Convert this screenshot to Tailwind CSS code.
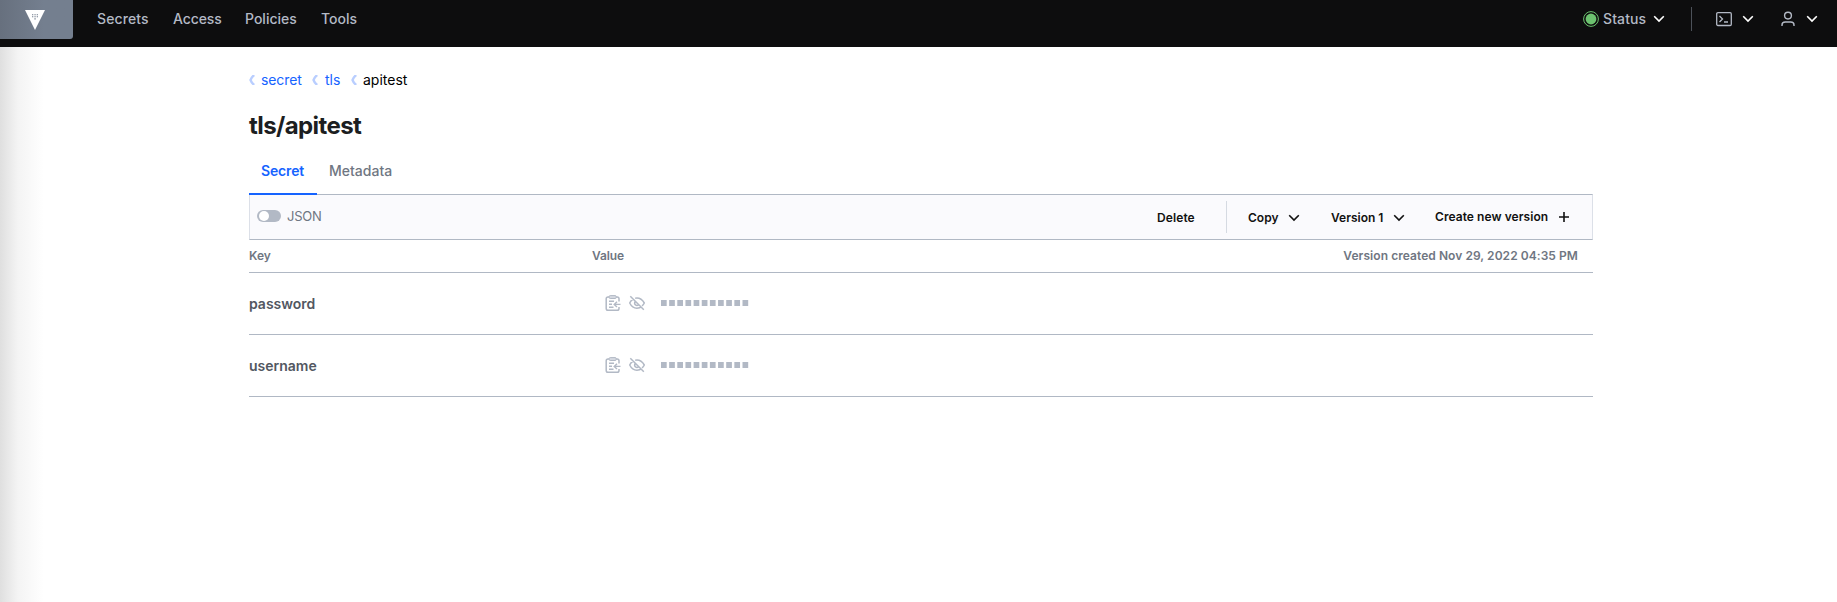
<!DOCTYPE html>
<html lang="en">
<head>
<meta charset="utf-8">
<title>tls/apitest</title>
<script src="https://cdn.jsdelivr.net/npm/@tailwindcss/browser@4"></script>
</head>
<body class="h-[602px] overflow-hidden bg-white font-['Inter',sans-serif] text-sm whitespace-nowrap">
<svg class="hidden">
  <symbol id="chev" viewBox="0 0 12 8"><path d="M1.2 1.3 6 6.1l4.8-4.8" fill="none" stroke="currentColor" stroke-width="1.6"/></symbol>
  <symbol id="crumb" viewBox="0 0 6 10"><path d="M5.2 0Q2.6 2 1.5 5q1.1 3 3.7 5" fill="none" stroke="currentColor" stroke-width="2.3"/></symbol>
  <symbol id="clip" viewBox="0 0 16 16"><path d="M4.5 2H3Q1.2 2 1.2 3.8v9.6q0 1.8 1.8 1.8h9.2q1.8 0 1.8-1.8V12M11 2h1.2q1.8 0 1.8 1.8V6.5" fill="none" stroke="currentColor" stroke-width="1.5"/><rect x="4.2" y=".6" width="7" height="2.9" rx="1" fill="#d5d9e1" stroke="currentColor"/><path d="M4 6.2h5M4 9.2h3M4 12.2h4.5M15.5 9.4H9.2M12 6.7 9.2 9.4l2.8 2.7" fill="none" stroke="currentColor" stroke-width="1.4"/></symbol>
  <symbol id="eyeoff" viewBox="0 0 16 16"><path d="M6.2 3.2Q11.8 2 15.3 8 14.5 9.6 13 10.9M3.8 4.3Q1.6 5.7.7 8q3 6 8.6 5.1 1.3-.2 2.5-1M6.4 6.5Q4.8 8.3 6.5 9.9 8 11 9.6 9.8M1.3 1.2l13.5 13.6" fill="none" stroke="currentColor" stroke-width="1.5"/></symbol>
</svg>
<header class="flex h-[47px] bg-[#0d0d0e] font-medium text-[#b3b9c5]">
  <div class="h-[39px] w-[73px] rounded-br-[3px] bg-linear-to-r from-[#67707e] to-[#747f8f] to-60%">
    <svg class="mt-[10px] ml-[25px] h-5 w-5" viewBox="0 0 20 20"><path d="M0 0h20L10 20z" fill="#fff"/><path d="M7 4.7h1.3M9.4 4.7h1.3M11.7 4.7H13M7 6.8h1.3M9.4 6.8h1.3M11.7 6.8H13M9.4 8.9h1.3" stroke="#747f8f" stroke-width="1.1"/></svg>
  </div>
  <nav class="flex h-[38px] items-center pl-6">
    <span class="w-[76px] tracking-[0.1px]">Secrets</span><span class="w-[72px] tracking-[-0.1px]">Access</span><span class="w-[76px]">Policies</span><span>Tools</span>
  </nav>
  <div class="ml-auto flex h-[38px] items-center pr-[19px]">
    <svg class="mr-1 h-4 w-4" viewBox="0 0 16 16"><circle cx="8" cy="8" r="7.4" fill="none" stroke="#6cc36f"/><circle cx="8" cy="8" r="5.4" fill="#6cc36f"/></svg>
    <span class="w-[50px] tracking-[0.1px]">Status</span>
    <svg class="h-2 w-3 text-white"><use href="#chev"/></svg>
    <span class="mr-6 ml-[26px] h-6 w-px bg-[#4c5159]"></span>
    <svg class="h-4 w-4" viewBox="0 0 16 16" fill="none" stroke="currentColor" stroke-width="1.3"><rect x=".7" y="1.7" width="14.6" height="12.8" rx="1.2"/><path d="m3.5 5 3 3-3 3M8 11h4"/></svg>
    <svg class="ml-[10px] h-2 w-3 text-white"><use href="#chev"/></svg>
    <svg class="ml-[26px] h-4 w-4" viewBox="0 0 16 16" fill="none" stroke="currentColor" stroke-width="1.4"><circle cx="8" cy="4.6" r="3.4"/><path d="M2 15v-1q0-3 3.2-3h5.6q3.2 0 3.2 3v1"/></svg>
    <svg class="ml-[10px] h-2 w-3 text-white"><use href="#chev"/></svg>
  </div>
</header>
<div class="flex h-[555px]">
  <div class="w-[249px] shrink-0 bg-linear-to-r from-[#dfdfdf] via-[#f4f4f4] via-[18px] to-white to-[44px]"></div>
  <main class="w-[1344px]">
    <div class="flex h-[66px] items-center text-[#1563ff]">
      <svg class="mr-[6px] h-[10px] w-[6px] text-[#b9ceff]"><use href="#crumb"/></svg><span class="w-[51px] tracking-[-0.1px]">secret</span>
      <svg class="mr-[7px] h-[10px] w-[6px] text-[#b9ceff]"><use href="#crumb"/></svg><span class="w-[26px]">tls</span>
      <svg class="mr-[6px] h-[10px] w-[6px] text-[#b9ceff]"><use href="#crumb"/></svg><span class="text-black">apitest</span>
    </div>
    <h1 class="h-[34px] text-2xl leading-[26px] font-bold tracking-[-0.6px] text-[#1c1e21]">tls/apitest</h1>
    <div class="flex h-[47px] font-medium text-[#6f7682]">
      <span class="z-10 h-[48px] w-[68px] border-b-2 border-[#1563ff] pt-[14px] pl-3 font-semibold tracking-[-0.15px] text-[#1563ff]">Secret</span>
      <span class="pt-[14px] pl-3">Metadata</span>
    </div>
    <div class="flex h-[46px] items-center border border-x-[#dce0e8] border-y-[#b0b8c4] bg-[#fafafd] pr-[23px] pl-[7px] text-xs font-semibold text-[#111]">
      <span class="mb-0.5 flex h-3 w-6 rounded-full bg-[#b2b9c5] p-px"><span class="ml-px h-[10px] w-[10px] rounded-full bg-white"></span></span>
      <span class="ml-[6px] text-[13px] font-normal tracking-[-0.2px] text-[#6f7682]">JSON</span>
      <span class="mt-0.5 ml-auto w-[69px] tracking-[0.1px]">Delete</span>
      <span class="h-8 w-px bg-[#d5dae2]"></span>
      <span class="mt-0.5 ml-[21px] w-[40px]">Copy</span><svg class="mt-0.5 h-2 w-3"><use href="#chev"/></svg>
      <span class="mt-0.5 ml-[31px] w-[62px]">Version 1</span><svg class="mt-0.5 h-2 w-3"><use href="#chev"/></svg>
      <span class="ml-[30px] w-[124px] tracking-[0.06px]">Create new version</span>
      <svg class="h-[10px] w-[10px]" viewBox="0 0 10 10"><path d="M5 0v10M0 5h10" stroke="currentColor" stroke-width="1.6"/></svg>
    </div>
    <div class="flex h-[33px] items-center border-b border-[#b0b8c4] pr-[15px] text-xs font-semibold text-[#6f7682]">
      <span class="w-[343px]">Key</span><span class="tracking-[-0.1px]">Value</span><span class="ml-auto tracking-[0.06px]">Version created Nov 29, 2022 04:35 PM</span>
    </div>
    <div class="flex h-[62px] items-center border-b border-[#b0b8c4] text-[#b2b9c5]">
      <span class="w-[356px] font-semibold text-[#525761]">password</span>
      <svg class="mb-0.5 h-4 w-4"><use href="#clip"/></svg><svg class="mb-0.5 ml-2 h-4 w-4"><use href="#eyeoff"/></svg>
      <svg class="mb-[1px] ml-4 h-[6px] w-[88px]"><path d="M0 3h88" stroke="currentColor" stroke-width="6" stroke-dasharray="5.7 2.45"/></svg>
    </div>
    <div class="flex h-[62px] items-center border-b border-[#b0b8c4] text-[#b2b9c5]">
      <span class="w-[356px] font-semibold text-[#525761]">username</span>
      <svg class="mb-0.5 h-4 w-4"><use href="#clip"/></svg><svg class="mb-0.5 ml-2 h-4 w-4"><use href="#eyeoff"/></svg>
      <svg class="mb-[1px] ml-4 h-[6px] w-[88px]"><path d="M0 3h88" stroke="currentColor" stroke-width="6" stroke-dasharray="5.7 2.45"/></svg>
    </div>
  </main>
</div>
</body>
</html>
